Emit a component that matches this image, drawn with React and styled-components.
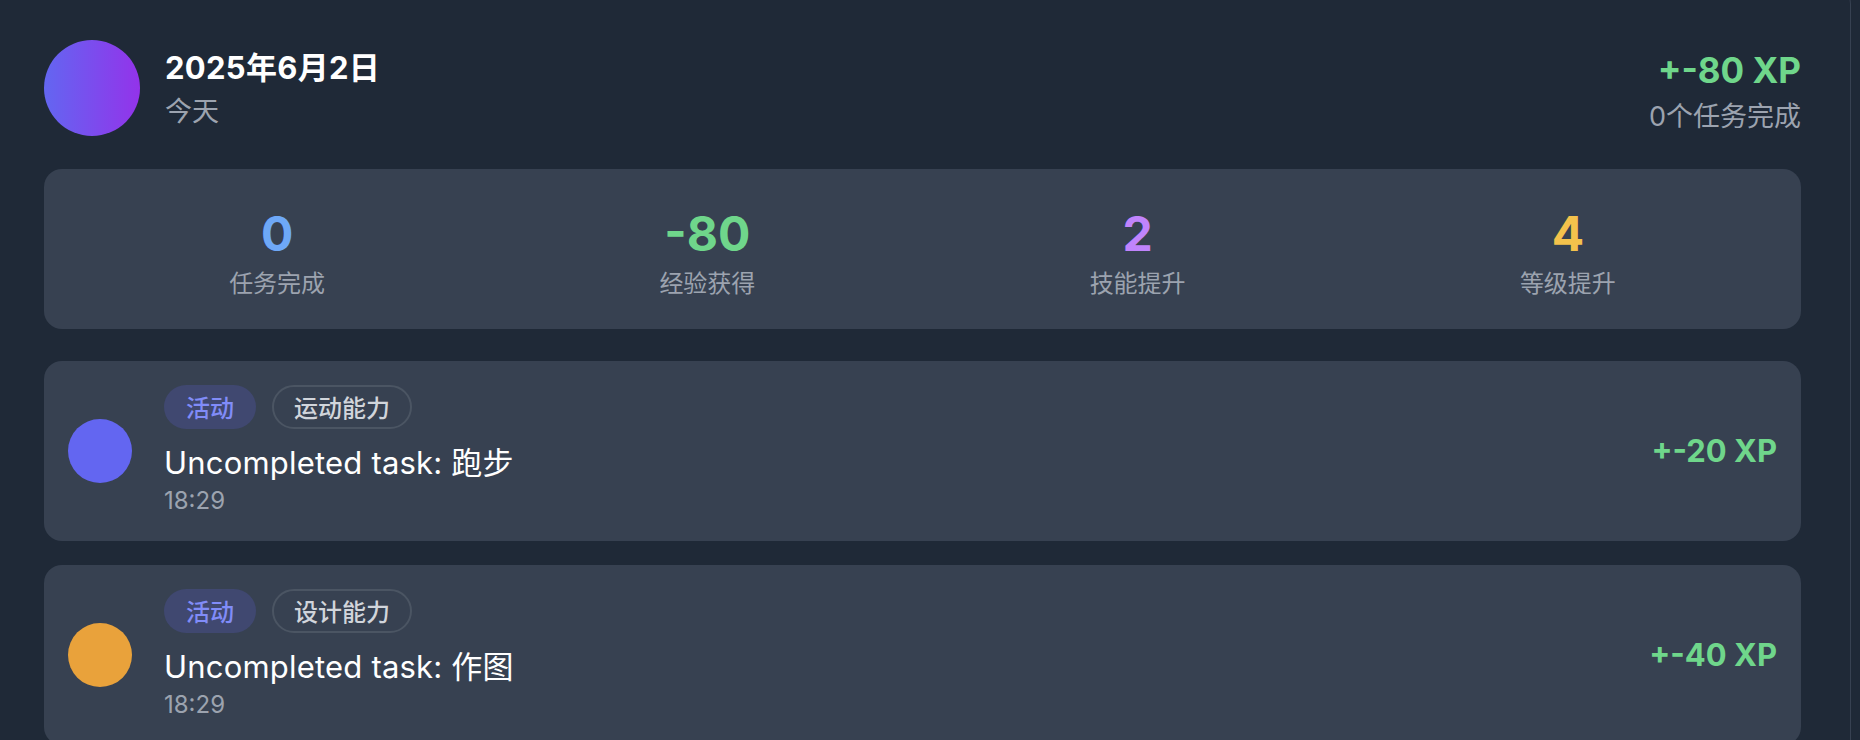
import React from 'react';
import styled, { createGlobalStyle } from 'styled-components';

const GlobalStyle = createGlobalStyle`
  html, body {
    margin: 0;
    padding: 0;
    overflow: hidden;
    background: #1f2937;
  }
  body {
    font-family: Inter, "Noto Sans CJK SC", sans-serif;
    -webkit-font-smoothing: antialiased;
  }
  * { box-sizing: border-box; }
`;

const Panel = styled.div`
  width: 1871px;
  margin: -20px 0 0 -20px;
  padding: 59px 49px 40px 63px;
  background: #1f2937;
  border: 1px solid #374151;
  border-radius: 24px;
`;

const Header = styled.header`
  display: flex;
  justify-content: space-between;
  align-items: flex-start;
`;

const Who = styled.div`
  display: flex;
  align-items: flex-start;
  gap: 25px;
`;

const Avatar = styled.div`
  width: 96px;
  height: 96px;
  border-radius: 50%;
  background: linear-gradient(90deg, #6366f1, #9333ea);
  flex-shrink: 0;
`;

const DateBlock = styled.div`
  padding-top: 8px;
`;

const DateTitle = styled.div`
  font-size: 31px;
  line-height: 40px;
  font-weight: 700;
  letter-spacing: 0.3px;
  color: #ffffff;
`;

const Muted = styled.div`
  font-size: ${(p) => p.$size || 27}px;
  line-height: 40px;
  color: #9ca3af;
  margin-top: ${(p) => p.$gap || 4}px;
`;

const Summary = styled.div`
  padding-top: 10px;
  text-align: right;
`;

const Xp = styled.div`
  font-size: ${(p) => p.$size}px;
  line-height: 40px;
  font-weight: 700;
  color: #6fd68b;
  white-space: nowrap;
`;

const StatsCard = styled.section`
  margin-top: 32px;
  display: grid;
  grid-template-columns: repeat(4, 1fr);
  gap: 36px;
  padding: 37px 36px 31px;
  background: #374151;
  border-radius: 18px;
`;

const Stat = styled.div`
  text-align: center;
`;

const StatValue = styled.div`
  font-size: 48px;
  line-height: 56px;
  font-weight: 700;
  color: ${(p) => p.$color};
`;

const StatLabel = styled.div`
  margin-top: 4px;
  font-size: 24px;
  line-height: 32px;
  color: #9ca3af;
  font-family: "Noto Sans CJK SC", sans-serif;
`;

const TaskList = styled.div`
  margin-top: 32px;
  display: flex;
  flex-direction: column;
  gap: 24px;
`;

const TaskCard = styled.article`
  display: flex;
  align-items: center;
  gap: 32px;
  padding: 24px;
  background: #374151;
  border-radius: 18px;
`;

const Dot = styled.div`
  width: 64px;
  height: 64px;
  border-radius: 50%;
  background: ${(p) => p.$color};
  flex-shrink: 0;
`;

const TaskBody = styled.div`
  flex: 1;
  min-width: 0;
`;

const Tags = styled.div`
  display: flex;
  gap: 16px;
  margin-bottom: 12px;
`;

const Tag = styled.span`
  display: inline-block;
  padding: 4px 20px;
  font-size: 24px;
  line-height: 32px;
  font-family: "Noto Sans CJK SC", sans-serif;
  font-weight: 500;
  border-radius: 999px;
  border: 2px solid ${(p) => (p.$outline ? '#4b5563' : 'transparent')};
  background: ${(p) => (p.$outline ? 'transparent' : 'rgba(99, 102, 241, 0.2)')};
  color: ${(p) => (p.$outline ? '#d1d5db' : '#818cf8')};
`;

const TaskTitle = styled.div`
  font-size: 31px;
  line-height: 44px;
  letter-spacing: 0.2px;
  color: #ffffff;
`;

const TaskTime = styled.div`
  font-size: 24px;
  line-height: 32px;
  color: #9ca3af;
`;

const stats = [
  { value: '0', label: '任务完成', color: '#6ea8f7' },
  { value: '-80', label: '经验获得', color: '#6fd68b' },
  { value: '2', label: '技能提升', color: '#c084fc' },
  { value: '4', label: '等级提升', color: '#f4c24c' },
];

const tasks = [
  { color: '#6366f1', skill: '运动能力', title: 'Uncompleted task: 跑步', time: '18:29', xp: '+-20 XP' },
  { color: '#e9a23b', skill: '设计能力', title: 'Uncompleted task: 作图', time: '18:29', xp: '+-40 XP' },
];

const App = () => {
  return (
    <>
      <GlobalStyle />
      <Panel>
        <Header>
          <Who>
            <Avatar />
            <DateBlock>
              <DateTitle>2025年6月2日</DateTitle>
              <Muted>今天</Muted>
            </DateBlock>
          </Who>
          <Summary>
            <Xp $size={35}>+-80 XP</Xp>
            <Muted $gap={7}>0个任务完成</Muted>
          </Summary>
        </Header>

        <StatsCard>
          {stats.map((s) => (
            <Stat key={s.label}>
              <StatValue $color={s.color}>{s.value}</StatValue>
              <StatLabel>{s.label}</StatLabel>
            </Stat>
          ))}
        </StatsCard>

        <TaskList>
          {tasks.map((t) => (
            <TaskCard key={t.title}>
              <Dot $color={t.color} />
              <TaskBody>
                <Tags>
                  <Tag>活动</Tag>
                  <Tag $outline>{t.skill}</Tag>
                </Tags>
                <TaskTitle>{t.title}</TaskTitle>
                <TaskTime>{t.time}</TaskTime>
              </TaskBody>
              <Xp $size={31}>{t.xp}</Xp>
            </TaskCard>
          ))}
        </TaskList>
      </Panel>
    </>
  );
};

export default App;
